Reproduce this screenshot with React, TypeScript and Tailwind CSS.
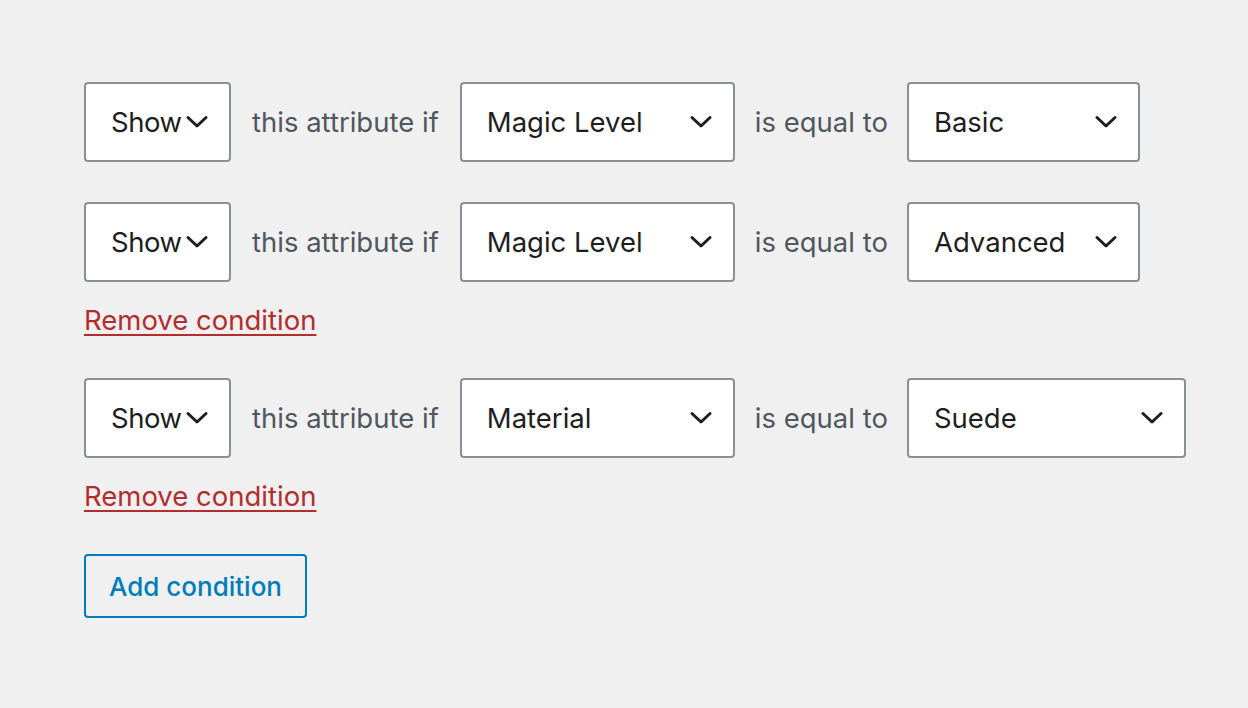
interface Condition {
  attribute: string;
  value: string;
  valueWidth: string;
  removable: boolean;
}

const conditions: Condition[] = [
  { attribute: 'Magic Level', value: 'Basic', valueWidth: 'w-[233px]', removable: false },
  { attribute: 'Magic Level', value: 'Advanced', valueWidth: 'w-[233px]', removable: true },
  { attribute: 'Material', value: 'Suede', valueWidth: 'w-[279px]', removable: true },
];

function Chevron() {
  return (
    <svg width="22" height="14" viewBox="0 0 22 14" fill="none" className="shrink-0">
      <path d="M2 2.5 L11 11 L20 2.5" stroke="#1e1e1e" strokeWidth="3" strokeLinecap="round" strokeLinejoin="round" />
    </svg>
  );
}

function Select({ label, className, compact }: { label: string; className: string; compact?: boolean }) {
  return (
    <div
      className={`h-20 flex items-center bg-white border-2 border-[#8c8f94] rounded-[4px] pl-[25px] pr-[21px] ${
        compact ? 'gap-[5px]' : 'justify-between'
      } ${className}`}
    >
      <span className={`text-[#1e1e1e] ${compact ? 'tracking-[-0.5px]' : ''}`}>{label}</span>
      <Chevron />
    </div>
  );
}

export default function App() {
  return (
    <div
      className="min-h-screen w-full bg-[#f0f0f1] pl-[84px] pt-[82px] text-[27.5px] leading-9"
      style={{ fontFamily: 'Inter, "Noto Sans", sans-serif' }}
    >
      <div className="flex flex-col gap-10">
        {conditions.map((c, i) => (
          <div key={i} className="flex flex-col">
            <div className="flex items-center">
              <Select label="Show" className="w-[147px]" compact />
              <span className="ml-[21px] text-[#50575e]">this attribute if</span>
              <Select label={c.attribute} className="ml-[21px] w-[275px]" />
              <span className="ml-5 text-[#50575e]">is equal to</span>
              <Select label={c.value} className={`ml-[19px] ${c.valueWidth}`} />
            </div>
            {c.removable && (
              <a
                href="#"
                className="mt-[20px] self-start text-[#b32d2e] underline underline-offset-[4px] decoration-2"
              >
                Remove condition
              </a>
            )}
          </div>
        ))}
        <button className="self-start w-[223px] h-16 pt-px border-2 border-[#007cba] rounded-[4px] text-[#007cba] text-[26px] font-medium">
          Add condition
        </button>
      </div>
    </div>
  );
}
